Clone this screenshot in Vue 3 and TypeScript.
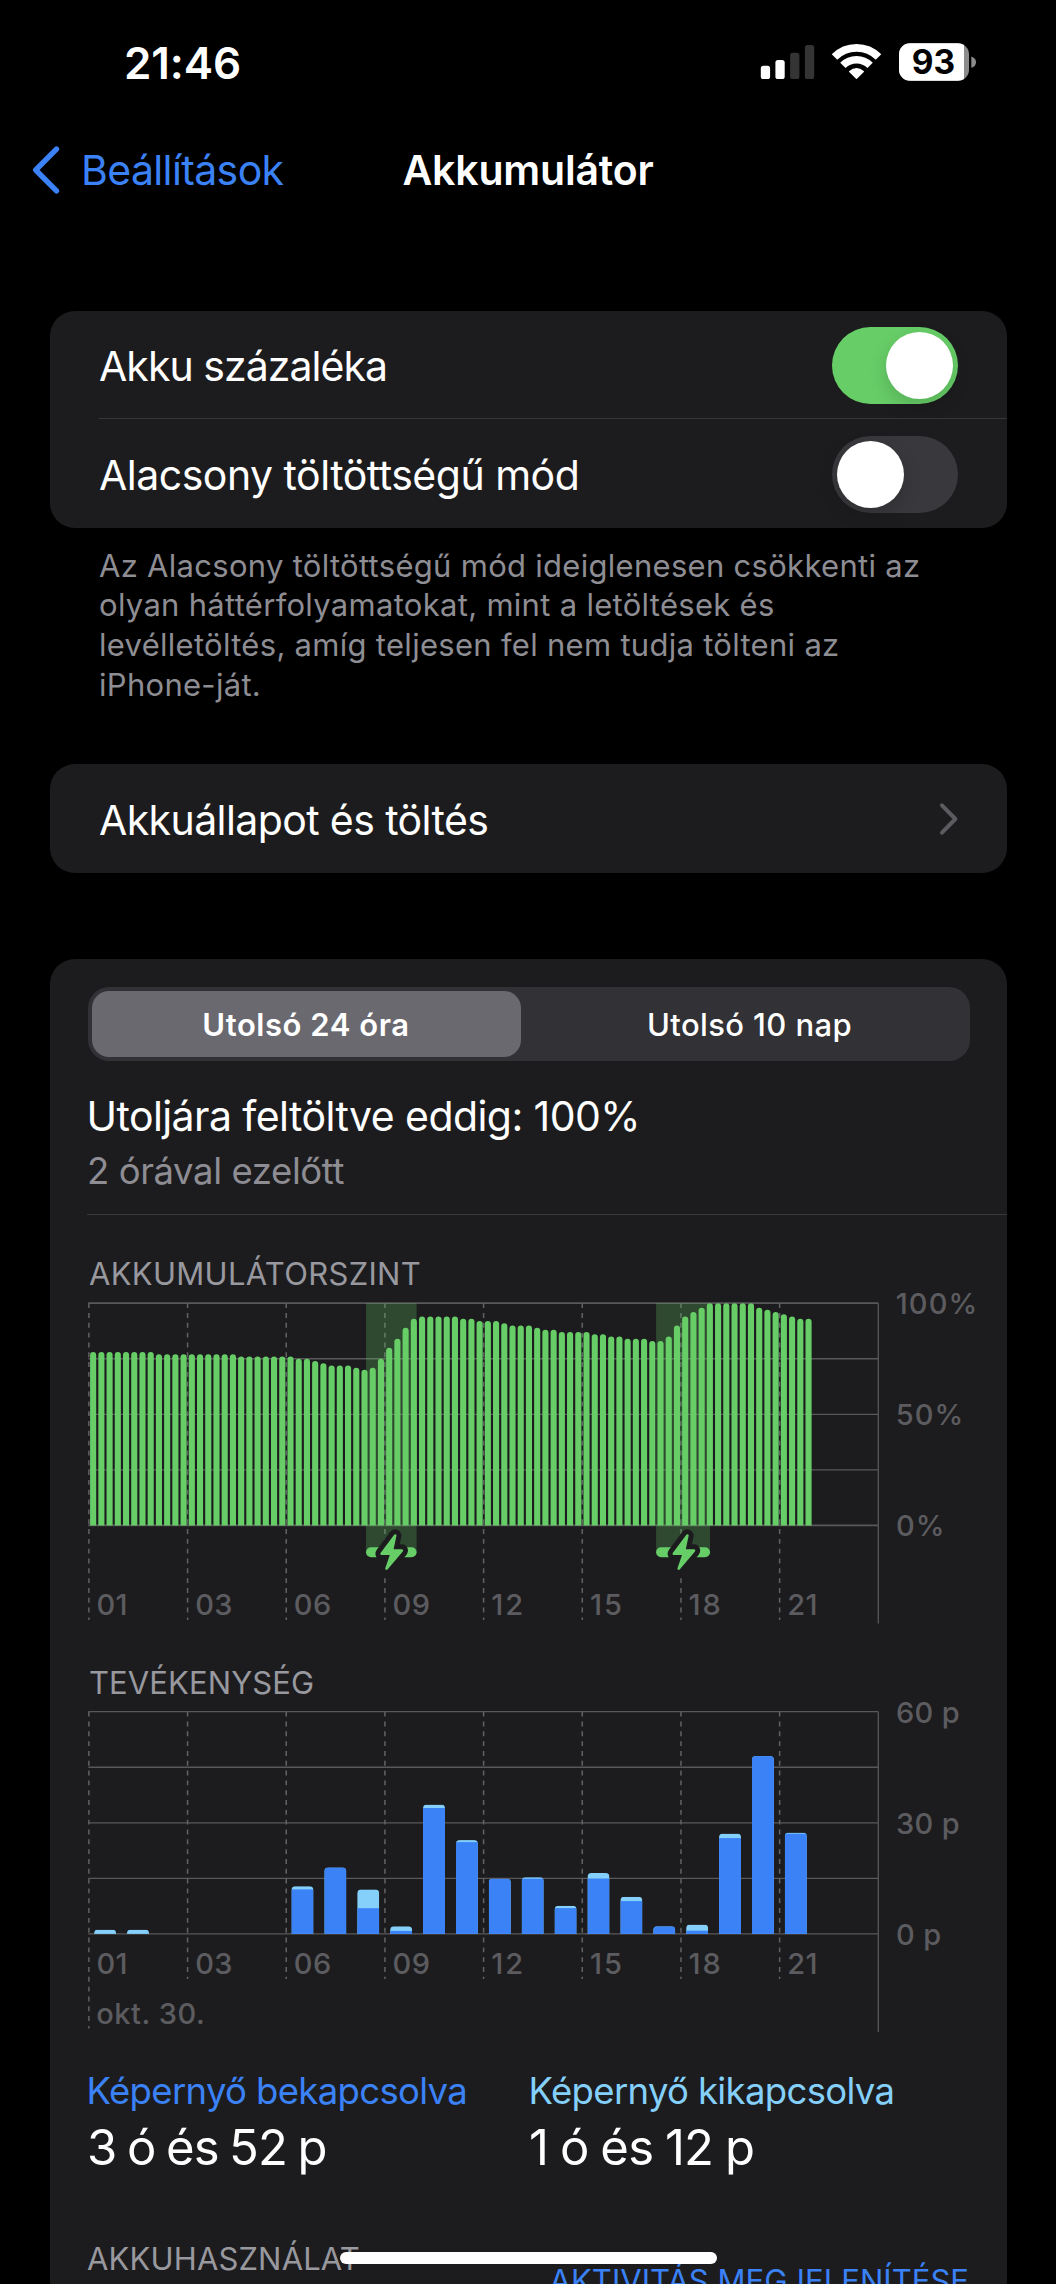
<script setup lang="ts">
import { ref } from 'vue'

interface Activity {
  hour: number
  total: number
  on: number
}

const percentShown = ref(true)
const lowPower = ref(false)
const range = ref<'day' | 'days'>('day')

const plotLeft = 39.9
const plotRight = 829.3
const hourStep = (plotRight - plotLeft) / 24
const slotStep = hourStep / 4
const topY = 9.2
const plotHeight = 222.2
const hours = ['01', '03', '06', '09', '12', '15', '18', '21']
const columnX = (i: number): number => plotLeft + i * hourStep * 3
const gridY = [0, 1, 2, 3, 4].map((i) => topY + (plotHeight * i) / 4)

// Battery level, stored as [percent, number of consecutive quarter-hour samples]
const levelRuns: [number, number][] = [
  [78, 8], [77, 10], [76, 7], [75, 2], [74, 1], [73, 1], [72, 3], [71, 1], [70, 1], [71, 1],
  [75, 1], [80, 1], [84, 1], [89, 1], [93, 1], [94, 5], [93, 2], [92, 3], [91, 1], [90, 3],
  [89, 1], [88, 2], [87, 4], [86, 2], [85, 2], [84, 3], [83, 2], [85, 1], [90, 1], [94, 1],
  [96, 1], [98, 1], [100, 6], [98, 1], [97, 1], [96, 1], [95, 1], [94, 1], [93, 2],
]
const levels: number[] = levelRuns.flatMap(([p, n]) => Array<number>(n).fill(p))

const charging = [
  { x: 317, width: 50.6, bolt: 0 },
  { x: 607.1, width: 53.9, bolt: 292.2 },
]

// Activity bar heights in chart units
const activity: Activity[] = [
  { hour: 0, total: 4.3, on: 0 },
  { hour: 1, total: 4.3, on: 0 },
  { hour: 6, total: 47.7, on: 44.5 },
  { hour: 7, total: 66.5, on: 66.5 },
  { hour: 8, total: 44.5, on: 25.7 },
  { hour: 9, total: 7.6, on: 3 },
  { hour: 10, total: 129.4, on: 125.9 },
  { hour: 11, total: 93.8, on: 91.8 },
  { hour: 12, total: 55.3, on: 55.3 },
  { hour: 13, total: 56.7, on: 55.2 },
  { hour: 14, total: 28.2, on: 25.8 },
  { hour: 15, total: 60.9, on: 55.4 },
  { hour: 16, total: 37.1, on: 32.8 },
  { hour: 17, total: 7.6, on: 7.6 },
  { hour: 18, total: 9.4, on: 3.2 },
  { hour: 19, total: 100.4, on: 95.8 },
  { hour: 20, total: 177.8, on: 177.8 },
  { hour: 21, total: 101.4, on: 100.2 },
]

function roundTop(x: number, width: number, height: number, radius: number): string {
  const bottom = topY + plotHeight
  const top = bottom - height
  const r = Math.min(radius, height)
  return `M${x} ${bottom}V${top + r}A${r} ${r} 0 0 1 ${x + r} ${top}H${x + width - r}A${r} ${r} 0 0 1 ${x + width} ${top + r}V${bottom}Z`
}

const levelPath = levels
  .map((p, i) => roundTop(plotLeft + 1.2 + i * slotStep, 6.1, (p / 100) * plotHeight, 3.05))
  .join('')
const barX = (hour: number): number => plotLeft + 5.2 + hour * hourStep
</script>

<template>
  <div class="screen">
    <header class="status">
      <span class="time">21:46</span>
      <div class="indicators">
        <svg class="signal" width="55" height="38" viewBox="0 0 55 38">
          <rect x="0.8" y="22.8" width="9.3" height="13.2" rx="2.6" fill="#fff" />
          <rect x="15.4" y="17" width="9.3" height="19" rx="2.6" fill="#fff" />
          <rect x="30.1" y="9.7" width="9.3" height="26.3" rx="2.6" fill="#343434" />
          <rect x="44.9" y="2" width="9.3" height="34" rx="2.6" fill="#343434" />
        </svg>
        <svg class="wifi" width="51" height="38" viewBox="-25.5 -36 51 38">
          <path d="M-22 -22A31 31 0 0 1 22 -22" fill="none" stroke="#fff" stroke-width="7.8" />
          <path d="M-13.6 -13.6A19.3 19.3 0 0 1 13.6 -13.6" fill="none" stroke="#fff" stroke-width="7.6" />
          <path d="M0 -.7L-6.8 -7.4Q0 -13 6.8 -7.4Z" fill="#fff" stroke="#fff" stroke-width="1.4" stroke-linejoin="round" />
        </svg>
        <svg class="battery" width="78" height="38" viewBox="0 0 78 38">
          <defs>
            <clipPath id="charge"><rect x="0" y="0" width="65" height="38" /></clipPath>
          </defs>
          <rect x="0" y="0.3" width="70" height="37.4" rx="11" fill="#8c8c8c" />
          <rect x="0" y="0.3" width="70" height="37.4" rx="11" fill="#fff" clip-path="url(#charge)" />
          <path d="M72.3 13.6Q77 15.2 77 19.2T72.3 24.8Z" fill="#8c8c8c" />
          <text class="charge-text" x="12.8" y="31.2">93</text>
        </svg>
      </div>
    </header>

    <nav class="nav">
      <a class="back">
        <svg width="28" height="48" viewBox="0 0 28 48">
          <path d="M24.5 3.2L3.7 24L24.5 44.8" fill="none" stroke="#3b82f7" stroke-width="5.4" stroke-linecap="round" stroke-linejoin="round" />
        </svg>
        <span>Beállítások</span>
      </a>
      <h1>Akkumulátor</h1>
    </nav>

    <section class="card">
      <div class="row first">
        <span class="ls-a">Akku százaléka</span>
        <button class="toggle" :class="{ on: percentShown }" @click="percentShown = !percentShown"><i></i></button>
      </div>
      <div class="row second">
        <span class="ls-b">Alacsony töltöttségű mód</span>
        <button class="toggle" :class="{ on: lowPower }" @click="lowPower = !lowPower"><i></i></button>
      </div>
    </section>
    <p class="note">
      Az Alacsony töltöttségű mód ideiglenesen csökkenti az<br />olyan háttérfolyamatokat, mint a letöltések és<br />levélletöltés, amíg teljesen fel nem tudja tölteni az<br />iPhone-ját.
    </p>

    <section class="card health">
      <div class="row">
        <span class="ls-c">Akkuállapot és töltés</span>
        <svg class="chevron" width="20" height="34" viewBox="0 0 20 34">
          <path d="M3 3.3L16.4 17L3 30.7" fill="none" stroke="#5b5b60" stroke-width="4" stroke-linecap="round" stroke-linejoin="round" />
        </svg>
      </div>
    </section>

    <section class="card usage">
      <div class="segments">
        <button class="day" :class="{ active: range === 'day' }" @click="range = 'day'">Utolsó 24 óra</button>
        <button class="days" :class="{ active: range === 'days' }" @click="range = 'days'">Utolsó 10 nap</button>
      </div>
      <div class="last">
        <div class="last-title">Utoljára feltöltve eddig: 100%</div>
        <div class="last-sub">2 órával ezelőtt</div>
      </div>

      <h2 class="level-title">AKKUMULÁTORSZINT</h2>
      <svg class="chart" width="957" height="340" viewBox="0 0 957 340">
        <g class="grid">
          <line v-for="(y, i) in gridY" :key="i" :x1="plotLeft - 0.6" :x2="plotRight" :y1="y" :y2="y" :class="{ edge: i % 4 === 0 }" />
          <line :x1="plotRight" :x2="plotRight" :y1="topY" y2="329.6" />
          <line v-for="(h, i) in hours" :key="h" class="dash" :x1="columnX(i)" :x2="columnX(i)" :y1="topY" y2="326" />
        </g>
        <rect v-for="c in charging" :key="c.x" :x="c.x" :y="topY" :width="c.width" height="249" fill="#67ce67" fill-opacity="0.25" />
        <path :d="levelPath" fill="#67ce67" />
        <g v-for="c in charging" :key="c.x">
          <rect :x="c.x" y="253.3" :width="c.width" height="10" rx="5" fill="#67ce67" />
          <g :transform="`translate(${c.bolt} 0)`" stroke-linejoin="round">
            <path d="M346.2 241.6L332.6 259.7H342.6L337.5 274.6L352.8 256.6H343Z" fill="#1c1c1e" stroke="#1c1c1e" stroke-width="12.5" />
            <path d="M346.2 241.6L332.6 259.7H342.6L337.5 274.6L352.8 256.6H343Z" fill="#67ce67" stroke="#67ce67" stroke-width="2.6" />
          </g>
        </g>
        <g class="axis">
          <text v-for="(h, i) in hours" :key="h" :class="{ loose: h[0] === '1' }" :x="columnX(i) + 7.6" y="321">{{ h }}</text>
          <text class="percent" x="846.7" y="19.5">100%</text>
          <text class="percent" x="846.7" y="130.7">50%</text>
          <text class="percent" x="847" y="241.7">0%</text>
        </g>
      </svg>

      <h2 class="activity-title">TEVÉKENYSÉG</h2>
      <svg class="chart" width="957" height="350" viewBox="0 -0.5 957 350">
        <g class="grid">
          <line v-for="(y, i) in gridY" :key="i" :x1="plotLeft - 0.6" :x2="plotRight" :y1="y" :y2="y" />
          <line :x1="plotRight" :x2="plotRight" :y1="topY" y2="329.6" />
          <line v-for="(h, i) in hours" :key="h" class="dash" :x1="columnX(i)" :x2="columnX(i)" :y1="topY" :y2="i === 0 ? 326 : 276.5" />
        </g>
        <g v-for="a in activity" :key="a.hour">
          <clipPath :id="`hour-${a.hour}`"><path :d="roundTop(barX(a.hour), 22, a.total, 4)" /></clipPath>
          <g :clip-path="`url(#hour-${a.hour})`">
            <rect :x="barX(a.hour)" :y="topY + plotHeight - a.total" width="22" :height="a.total" fill="#84d0fb" />
            <rect :x="barX(a.hour)" :y="topY + plotHeight - a.on" width="22" :height="a.on" fill="#3b82f7" />
          </g>
        </g>
        <g class="axis">
          <text v-for="(h, i) in hours" :key="h" :class="{ loose: h[0] === '1' }" :x="columnX(i) + 7.6" y="271.5">{{ h }}</text>
          <text class="date" x="47.2" y="321.5">okt. 30.</text>
          <text x="846.9" y="20">60 p</text>
          <text x="846.9" y="131">30 p</text>
          <text x="846.9" y="242">0 p</text>
        </g>
      </svg>

      <div class="stats">
        <div class="stat">
          <div class="stat-label screen-on">Képernyő bekapcsolva</div>
          <div class="stat-value tight">3 ó és 52 p</div>
        </div>
        <div class="stat">
          <div class="stat-label screen-off">Képernyő kikapcsolva</div>
          <div class="stat-value">1 ó és 12 p</div>
        </div>
      </div>

      <div class="usage-head">
        <span class="usage-title">AKKUHASZNÁLAT</span>
        <a class="usage-link">AKTIVITÁS MEGJELENÍTÉSE</a>
      </div>
    </section>

    <div class="home"></div>
  </div>
</template>

<style>
body {
  margin: 0;
  background: #000;
}
</style>

<style scoped>
.screen {
  position: relative;
  box-sizing: border-box;
  width: 1056px;
  height: 2284px;
  padding: 0 49.5px;
  overflow: hidden;
  background: #000;
  color: #fff;
  font-family: Inter, "Liberation Sans", sans-serif;
  font-size: 41px;
}
svg {
  display: block;
  flex: none;
  overflow: visible;
}
button {
  border: 0;
  padding: 0;
  font: inherit;
  color: inherit;
}
.status {
  display: flex;
  align-items: center;
  justify-content: space-between;
  height: 126px;
  padding: 0 29.5px 0 74.5px;
}
.time {
  font-size: 44px;
  font-weight: 600;
  letter-spacing: -0.1px;
}
.indicators {
  display: flex;
  padding-bottom: 2px;
}
.wifi {
  margin: 0 17px 0 16px;
}
.charge-text {
  font-size: 33.5px;
  font-weight: 700;
  letter-spacing: 0;
  fill: #000;
}
.nav {
  display: grid;
  grid-template-columns: 1fr auto 1fr;
  align-items: center;
  height: 88px;
  margin: 0 -17.5px 97px;
}
.back {
  display: flex;
  align-items: center;
  gap: 21px;
  color: #3b82f7;
  letter-spacing: -0.62px;
}
.nav h1 {
  margin: 0;
  font-size: 41px;
  font-weight: 600;
  letter-spacing: -0.2px;
}
.card {
  border-radius: 25px;
  background: #1c1c1e;
}
.row {
  display: flex;
  align-items: center;
  justify-content: space-between;
  height: 109px;
  padding: 0 48.5px 0 49.5px;
}
.row span {
  padding-top: 2px;
}
.first {
  height: 108px;
  background: linear-gradient(#37373a, #37373a) 49px 100% / 100% 1.5px no-repeat;
}
.second .toggle {
  margin-top: 1px;
}
.ls-a { letter-spacing: -0.95px; }
.ls-b { letter-spacing: -0.5px; }
.ls-c { letter-spacing: -0.6px; }
.toggle {
  display: flex;
  box-sizing: border-box;
  width: 126px;
  height: 77px;
  padding: 5px;
  border-radius: 39px;
  background: #39393d;
}
.toggle i {
  width: 67px;
  height: 67px;
  border-radius: 50%;
  background: #fff;
  box-shadow: 0 7px 18px rgba(0, 0, 0, 0.16);
}
.toggle.on {
  justify-content: flex-end;
  background: #67ce67;
}
.note {
  height: 159px;
  margin: 0;
  padding: 17.5px 0 59.5px 49.5px;
  color: #8d8d93;
  font-size: 31px;
  line-height: 39.75px;
  letter-spacing: 0.29px;
  white-space: nowrap;
}
.chevron {
  margin-right: -1px;
}
.usage {
  height: 1400px;
  margin-top: 86px;
  padding-top: 28px;
}
.segments {
  display: flex;
  justify-content: space-between;
  box-sizing: border-box;
  height: 74px;
  margin: 0 37px 0 38px;
  padding: 4px;
  border-radius: 21px;
  background: #313136;
}
.segments button {
  width: 429px;
  border-radius: 17px;
  background: none;
  font-size: 31px;
  font-weight: 500;
  letter-spacing: 0.38px;
}
.segments .days {
  width: 432px;
}
.segments .active {
  background: #69696f;
  font-weight: 600;
  letter-spacing: 0.55px;
}
.last {
  display: flex;
  flex-direction: column;
  gap: 4.6px;
  box-sizing: border-box;
  height: 154px;
  margin-left: 37px;
  padding-top: 30.4px;
  border-bottom: 1px solid #38383a;
}
.last-title {
  line-height: 50px;
  letter-spacing: -0.57px;
}
.last-sub {
  padding-left: 0.5px;
  color: #8d8d93;
  font-size: 36.5px;
  line-height: 50px;
  letter-spacing: -0.4px;
}
h2 {
  margin: 0 0 0 39.5px;
  color: #98989f;
  font-size: 31px;
  font-weight: 400;
  line-height: 40px;
}
.level-title {
  padding-top: 39px;
  letter-spacing: 0.3px;
}
.chart {
  margin-left: -0.5px;
}
.activity-title {
  padding-top: 28.6px;
  line-height: 39.4px;
  letter-spacing: 0.1px;
}
.grid line {
  stroke: #58585b;
  stroke-width: 1.3;
}
.grid .edge {
  stroke-width: 1.7;
}
.grid .dash {
  stroke: #626265;
  stroke-width: 1.5;
  stroke-dasharray: 4.9 4.92;
}
.axis text {
  fill: #5c5c60;
  font-size: 29px;
  font-weight: 500;
  letter-spacing: 0.4px;
}
.axis .loose {
  letter-spacing: 2px;
}
.axis .percent {
  letter-spacing: 1.1px;
}
.axis .date {
  letter-spacing: 0.54px;
}
.stats {
  display: grid;
  grid-template-columns: 442px 1fr;
  margin-left: 37px;
  padding-top: 16.2px;
}
.stat-label {
  font-size: 36.5px;
  line-height: 46px;
  letter-spacing: -0.65px;
}
.screen-on {
  color: #3b82f7;
}
.screen-off {
  color: #84d0fb;
}
.stat-value {
  padding: 4px 0 0 0.6px;
  font-size: 49px;
  line-height: 60px;
  letter-spacing: -0.8px;
  word-spacing: -1.2px;
}
.stat-value.tight {
  word-spacing: -2.6px;
}
.usage-head {
  display: flex;
  justify-content: space-between;
  margin: 61px 37.5px 0 37.5px;
  font-size: 31px;
  line-height: 40px;
}
.usage-title {
  color: #98989f;
  letter-spacing: 0.15px;
}
.usage-link {
  padding-top: 21.5px;
  color: #3b82f7;
  letter-spacing: 0.03px;
}
.home {
  position: absolute;
  left: 340px;
  top: 2252px;
  width: 377px;
  height: 12px;
  border-radius: 6px;
  background: #fff;
}
</style>
